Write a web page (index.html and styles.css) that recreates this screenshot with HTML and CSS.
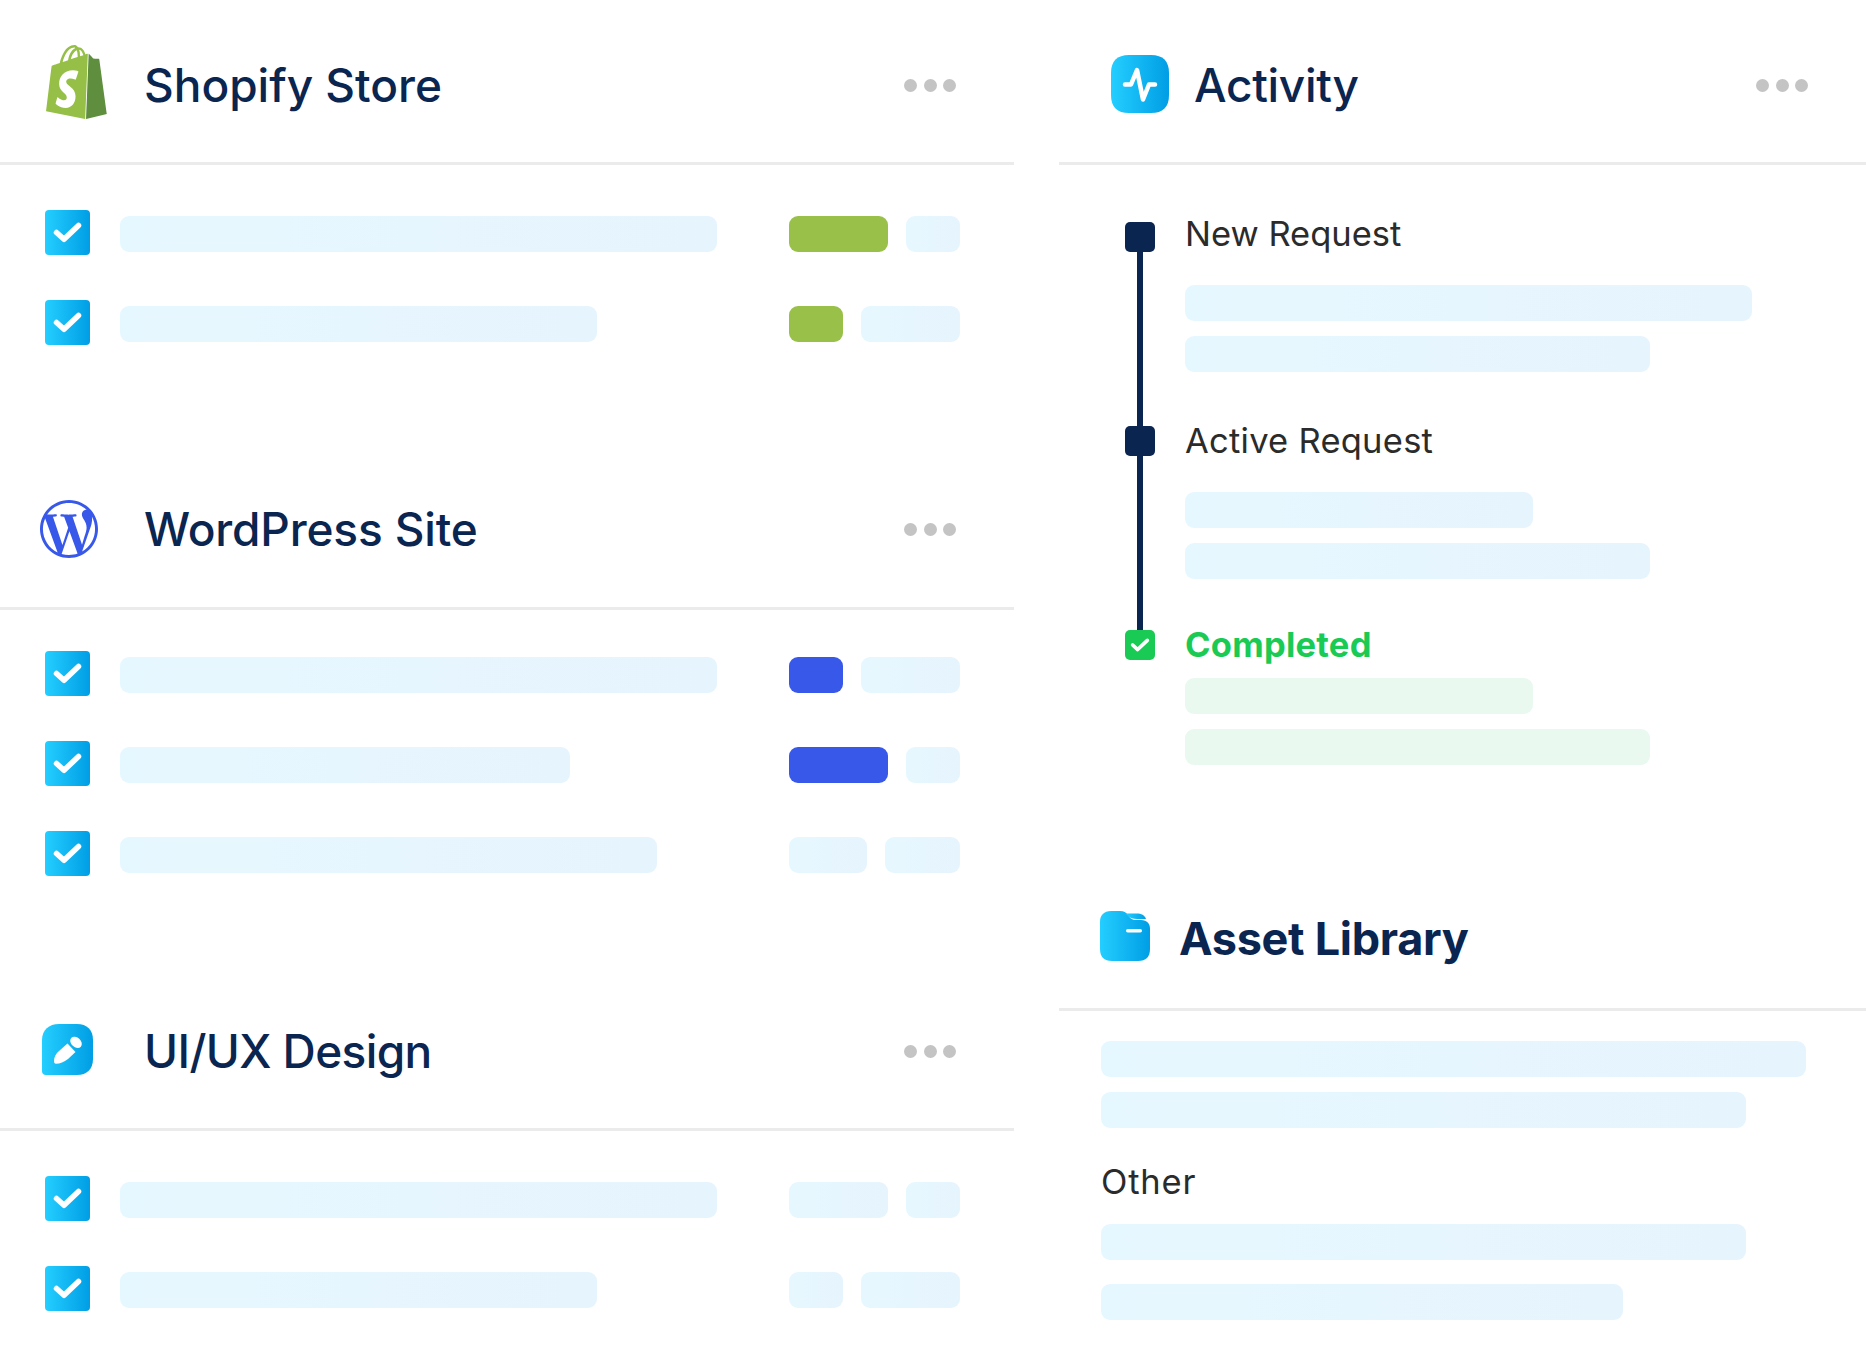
FILE: index.html
```html
<!DOCTYPE html>
<html lang="en">
<head>
<meta charset="utf-8">
<title>Project dashboard</title>
<link rel="stylesheet" href="styles.css">
</head>
<body>
<svg class="defs" width="0" height="0" aria-hidden="true">
  <defs>
    <linearGradient id="blue" x1="0" y1="0" x2="1" y2="0">
      <stop offset="0" stop-color="#24ceff"/>
      <stop offset="1" stop-color="#009ee5"/>
    </linearGradient>
    <symbol id="tick" viewBox="0 0 45 45">
      <path d="M11.500 22.500l7.500 6.800L33.500 15.500" fill="none" stroke="#fff" stroke-width="5.500" stroke-linecap="round" stroke-linejoin="round"/>
    </symbol>
  </defs>
</svg>
<main class="page">
  <div class="col">
    <section class="panel">
      <header class="head">
        <svg class="icon icon-shopify" viewBox="1.4 0 21.2 24" preserveAspectRatio="none">
          <path fill="#95bf46" d="M11.71 11.305s-.81-.424-1.774-.424c-1.447 0-1.504.906-1.504 1.141 0 1.232 3.24 1.715 3.24 4.629 0 2.295-1.44 3.76-3.406 3.76-2.354 0-3.54-1.465-3.54-1.465l.646-2.086s1.245 1.066 2.28 1.066c.675 0 .975-.545.975-.932 0-1.619-2.654-1.694-2.654-4.359-.034-2.237 1.571-4.416 4.827-4.416 1.257 0 1.875.361 1.875.361l-.945 2.715-.02.01zM11.17.83c.136 0 .271.038.405.135-.984.465-2.064 1.639-2.508 3.992-.656.213-1.293.405-1.889.578C7.697 3.75 8.951.84 11.17.84V.83zm1.235 2.949v.135c-.754.232-1.583.484-2.394.736.466-1.777 1.333-2.645 2.085-2.971.193.501.309 1.176.309 2.1zm.539-2.234c.694.074 1.141.867 1.429 1.755-.349.114-.735.231-1.158.366v-.252c0-.752-.096-1.371-.271-1.871v.002zm2.992 1.289c-.02 0-.06.021-.078.021s-.289.075-.714.21c-.423-1.233-1.176-2.37-2.508-2.37h-.115C12.135.209 11.669 0 11.265 0 8.159 0 6.675 3.877 6.21 5.846c-1.194.365-2.063.636-2.16.674-.675.213-.694.232-.772.87-.075.462-1.83 14.063-1.83 14.063L15.009 24l.927-21.166z"/>
          <path fill="#5e8e3e" d="M15.337 23.979l7.216-1.561s-2.604-17.613-2.625-17.73c-.018-.116-.114-.192-.211-.192s-1.929-.136-1.929-.136-1.275-1.274-1.439-1.411c-.045-.037-.075-.057-.121-.074l-.914 21.104h.023z"/>
        </svg>
        <h2 class="title">Shopify Store</h2>
        <span class="dots"><i></i><i></i><i></i></span>
      </header>
      <div class="rows">
        <div class="row"><span class="check"><svg><use href="#tick"/></svg></span><span class="bar w-597"></span><span class="pills"><span class="pill w-99 green"></span><span class="pill w-54"></span></span></div>
        <div class="row"><span class="check"><svg><use href="#tick"/></svg></span><span class="bar w-477"></span><span class="pills"><span class="pill w-54 green"></span><span class="pill w-99"></span></span></div>
      </div>
    </section>

    <section class="panel panel-wp">
      <header class="head head-wp">
        <svg class="icon icon-wp" viewBox="0 0 24 24">
          <path fill="#3858e9" d="M21.469 6.825c.84 1.537 1.318 3.3 1.318 5.175 0 3.979-2.156 7.456-5.363 9.325l3.295-9.527c.615-1.54.82-2.771.82-3.864 0-.405-.026-.78-.07-1.11m-7.981.105c.647-.03 1.232-.105 1.232-.105.582-.075.514-.93-.067-.899 0 0-1.755.135-2.88.135-1.064 0-2.85-.15-2.85-.15-.585-.03-.661.855-.075.885 0 0 .54.061 1.125.09l1.68 4.605-2.37 7.08L5.354 6.9c.649-.03 1.234-.1 1.234-.1.585-.075.516-.93-.065-.896 0 0-1.746.138-2.874.138-.2 0-.438-.008-.69-.015C4.911 3.15 8.235 1.215 12 1.215c2.809 0 5.365 1.072 7.286 2.833-.046-.003-.091-.009-.141-.009-1.06 0-1.812.923-1.812 1.914 0 .89.513 1.643 1.06 2.531.411.72.89 1.643.89 2.977 0 .915-.354 1.994-.821 3.479l-1.075 3.585-3.9-11.61.001.014zM12 22.784c-1.059 0-2.081-.153-3.048-.437l3.237-9.406 3.315 9.087c.024.053.05.101.078.149-1.12.393-2.325.609-3.582.609M1.211 12c0-1.564.336-3.05.935-4.39L7.29 21.709C3.694 19.96 1.212 16.271 1.211 12M12 0C5.385 0 0 5.385 0 12s5.385 12 12 12 12-5.385 12-12S18.615 0 12 0"/>
        </svg>
        <h2 class="title title-wp">WordPress Site</h2>
        <span class="dots"><i></i><i></i><i></i></span>
      </header>
      <div class="rows rows-wp">
        <div class="row"><span class="check"><svg><use href="#tick"/></svg></span><span class="bar w-597"></span><span class="pills"><span class="pill w-54 blue"></span><span class="pill w-99"></span></span></div>
        <div class="row"><span class="check"><svg><use href="#tick"/></svg></span><span class="bar w-450"></span><span class="pills"><span class="pill w-99 blue"></span><span class="pill w-54"></span></span></div>
        <div class="row"><span class="check"><svg><use href="#tick"/></svg></span><span class="bar w-537"></span><span class="pills"><span class="pill w-78"></span><span class="pill w-75"></span></span></div>
      </div>
    </section>

    <section class="panel panel-ui">
      <header class="head">
        <svg class="icon icon-ui" viewBox="0 0 51 51">
          <path fill="url(#blue)" d="M17 0h18c10 0 16 6 16 16v19c0 10-6 16-16 16H4c-2.500 0-4-1.500-4-4V16C0 6 7 0 17 0z"/>
          <path fill="#fff" d="M25.500 19.500l8 8.500-7.500 7c-4 3-8 4.700-12 4.700-1.500 0-2-1.200-2-2.700 0-4 2-7.500 5-10z"/>
          <ellipse fill="#fff" cx="34" cy="18.300" rx="6.500" ry="4.800" transform="rotate(42 34 18.300)"/>
        </svg>
        <h2 class="title title-ui">UI/UX Design</h2>
        <span class="dots"><i></i><i></i><i></i></span>
      </header>
      <div class="rows rows-ui">
        <div class="row"><span class="check"><svg><use href="#tick"/></svg></span><span class="bar w-597"></span><span class="pills"><span class="pill w-99"></span><span class="pill w-54"></span></span></div>
        <div class="row"><span class="check"><svg><use href="#tick"/></svg></span><span class="bar w-477"></span><span class="pills"><span class="pill w-54"></span><span class="pill w-99"></span></span></div>
      </div>
    </section>
  </div>

  <div class="col">
    <section class="panel">
      <header class="head">
        <svg class="icon icon-activity" viewBox="0 0 58 58">
          <path fill="url(#blue)" d="M18 0h22c12 0 18 6 18 18v22c0 12-6 18-18 18H18C6 58 0 52 0 40V18C0 6 6 0 18 0z"/>
          <path fill="none" stroke="#fff" stroke-width="4.500" stroke-linecap="round" stroke-linejoin="round" d="M14 29.500h6L26 15l6 29.500 6-15h6"/>
        </svg>
        <h2 class="title title-activity">Activity</h2>
        <span class="dots"><i></i><i></i><i></i></span>
      </header>
      <div class="timeline">
        <div class="step">
          <div class="rail"><span class="node"></span><span class="wire"></span></div>
          <div class="step-body">
            <div class="label">New Request</div>
            <span class="bar w-567"></span>
            <span class="bar w-465"></span>
          </div>
        </div>
        <div class="step">
          <div class="rail"><span class="node"></span><span class="wire"></span></div>
          <div class="step-body step-body-mid">
            <div class="label label-active">Active Request</div>
            <span class="bar w-348"></span>
            <span class="bar w-465"></span>
          </div>
        </div>
        <div class="step">
          <div class="rail"><span class="node node-done"><svg><use href="#tick"/></svg></span></div>
          <div class="step-body">
            <div class="label label-done">Completed</div>
            <span class="bar bar-green w-348"></span>
            <span class="bar bar-green w-465"></span>
          </div>
        </div>
      </div>
    </section>

    <section class="panel panel-asset">
      <header class="head head-asset">
        <svg class="icon icon-folder" viewBox="0 0 50 50">
          <path fill="url(#blue)" d="M11 0h9c4 0 6 1.500 8 4 2 3 4 5 8.500 5H41c6 0 9 3.500 9 9v20c0 8-4 12-12 12H12C4 50 0 46 0 38V11C0 4 4 0 11 0z"/>
          <path fill="url(#blue)" d="M25.500 2.500h11c5 0 8 1.500 9.500 5.500h-9c-4 0-7-1-9-3z"/>
          <rect fill="#fff" x="26" y="18" width="16" height="3.500" rx="1.750"/>
        </svg>
        <h2 class="title title-bold">Asset Library</h2>
      </header>
      <div class="assets">
        <span class="bar w-705"></span>
        <span class="bar w-645"></span>
        <div class="label label-other">Other</div>
        <span class="bar w-645"></span>
        <span class="bar bar-last w-522"></span>
      </div>
    </section>
  </div>
</main>
</body>
</html>
```

FILE: styles.css
```css
* { box-sizing: border-box; }

html, body { margin: 0; padding: 0; background: #fff; }

body {
  width: 1866px;
  height: 1365px;
  overflow: hidden;
  font-family: Inter, "Noto Sans", sans-serif;
}

.defs { position: absolute; }

.page {
  display: grid;
  grid-template-columns: 1014px 807px;
  column-gap: 45px;
  align-items: start;
}

.head {
  display: flex;
  align-items: center;
  height: 165px;
  padding-top: 8px;
  border-bottom: 3px solid #ebebeb;
}

.head-wp { padding-top: 6px; }

.title {
  margin: 0;
  font-size: 46px;
  font-weight: 450;
  line-height: 56px;
  color: #0a2550;
}

.title-wp { letter-spacing: -0.15px; }
.title-ui { letter-spacing: -0.6px; }
.title-activity { letter-spacing: -0.3px; }
.title-bold { font-size: 45px; font-weight: 700; letter-spacing: -0.3px; }

.icon { flex: none; display: block; }

.icon-shopify { width: 61px; height: 74px; margin: -6px 37px 0 46px; }
.icon-wp { width: 58px; height: 58px; margin: 0 46px 0 40px; }
.icon-ui { width: 51px; height: 51px; margin: -4px 51px 0 42px; }
.icon-activity { width: 58px; height: 58px; margin: -2px 25px 0 52px; }
.icon-folder { width: 50px; height: 50px; margin: -6px 29px 0 41px; }

.dots { display: flex; gap: 6.500px; margin-left: auto; margin-right: 58px; }
.dots i { width: 13px; height: 13px; border-radius: 50%; background: #c4c4c4; }

.rows { display: flex; flex-direction: column; gap: 45px; padding-top: 45px; }
.rows-wp { padding-top: 41px; }
.rows-ui { padding-top: 45px; }

.row { display: flex; align-items: center; padding-left: 45px; }

.check {
  flex: none;
  width: 45px;
  height: 45px;
  margin-right: 30px;
  border-radius: 4px;
  background: linear-gradient(90deg, #24ceff, #009ee5);
}

.check svg, .node-done svg { display: block; width: 100%; height: 100%; }

.bar {
  display: block;
  height: 36px;
  margin-top: 2px;
  border-radius: 9px;
  background: linear-gradient(90deg, #e6f8ff, #e6f4fd);
}

.bar-green { background: #e9f9f0; }

.w-705 { width: 705px; }
.w-645 { width: 645px; }
.w-597 { width: 597px; }
.w-567 { width: 567px; }
.w-537 { width: 537px; }
.w-522 { width: 522px; }
.w-477 { width: 477px; }
.w-465 { width: 465px; }
.w-450 { width: 450px; }
.w-348 { width: 348px; }

.pills { display: flex; gap: 18px; width: 171px; margin-left: auto; margin-right: 54px; margin-top: 2px; }
.pill { height: 36px; border-radius: 9px; background: linear-gradient(90deg, #e6f8ff, #e6f4fd); }
.pill.w-99 { width: 99px; }
.pill.w-78 { width: 78px; }
.pill.w-75 { width: 75px; }
.pill.w-54 { width: 54px; }
.pill.green { background: #99c14a; }
.pill.blue { background: #3858e9; }

.row .bar { margin-top: 2px; margin-right: 72px; }

.panel-wp { margin-top: 100px; }
.panel-ui { margin-top: 90px; }

.timeline { padding: 57px 0 0 66px; }

.step { display: grid; grid-template-columns: 30px 1fr; column-gap: 30px; height: 204px; }

.rail { display: flex; flex-direction: column; align-items: center; }
.node { flex: none; width: 30px; height: 30px; border-radius: 5px; background: #0a2550; }
.node-done { background: #19cb55; }
.wire { flex: 1; width: 6px; background: #0a2550; }

.step-body .bar { margin-top: 0; margin-bottom: 15px; }
.step-body-mid { padding-top: 3px; }

.label {
  height: 24px;
  margin-bottom: 39px;
  font-size: 34.500px;
  line-height: 24px;
  color: #2b2b2b;
}

.label-active { letter-spacing: 0.25px; }

.label-done {
  height: 30px;
  margin-bottom: 18px;
  line-height: 30px;
  font-weight: 700;
  letter-spacing: 0.25px;
  color: #19cb55;
}

.panel-asset { margin-top: 35px; }

.head-asset { height: 142px; padding-top: 0; }

.assets { padding: 30px 0 0 42px; }
.assets .bar { margin-top: 0; margin-bottom: 15px; }

.assets .label-other { margin: 42px 0 30px; letter-spacing: 0.8px; }

.assets .bar-last { margin-top: 24px; }
```
